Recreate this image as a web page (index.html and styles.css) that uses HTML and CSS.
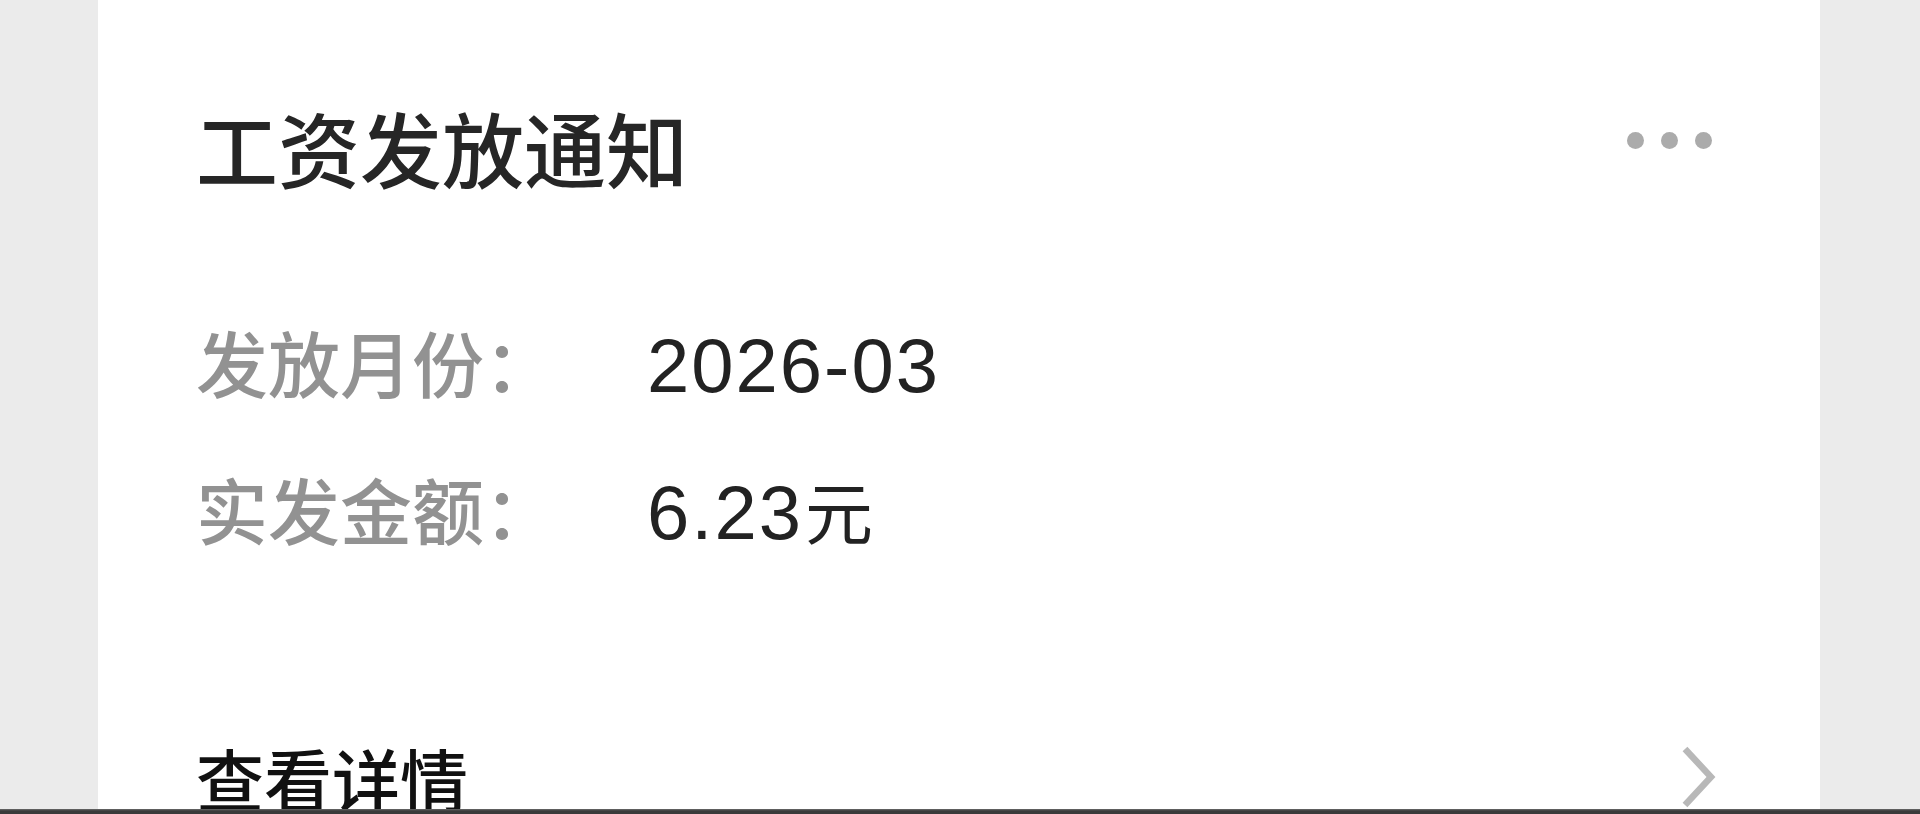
FILE: index.html
```html
<!DOCTYPE html>
<html lang="zh-CN">
<head>
<meta charset="utf-8">
<title>工资发放通知</title>
<link rel="stylesheet" href="styles.css">
</head>
<body>
<div class="page">
  <div class="stage">
    <div class="card">
      <div class="head">
        <h1 class="title">工资发放通知</h1>
        <div class="more"><span></span><span></span><span></span></div>
      </div>
      <div class="info">
        <div class="row">
          <div class="label">发放月份：</div>
          <div class="value">2026-03</div>
        </div>
        <div class="row">
          <div class="label">实发金额：</div>
          <div class="value">6.23<span class="unit">元</span></div>
        </div>
      </div>
      <div class="link">
        <div class="link-text">查看详情</div>
        <svg class="chev" width="44" height="66" viewBox="0 0 44 66"><path d="M13 3 L39 31 L13 59" fill="none" stroke="#b8b8b8" stroke-width="6.5" stroke-linejoin="miter"/></svg>
      </div>
    </div>
  </div>
  <div class="bar"></div>
</div>
</body>
</html>
```
FILE: styles.css
```css
html, body {
  margin: 0;
  padding: 0;
}
body {
  background: #ebebeb;
  font-family: "Noto Sans CJK SC", "Noto Sans", sans-serif;
}
.page {
  width: 1920px;
  height: 814px;
  display: flex;
  flex-direction: column;
  overflow: hidden;
}
.stage {
  height: 809px;
  padding-left: 98px;
  overflow: hidden;
}
.card {
  width: 1722px;
  height: 809px;
  box-sizing: border-box;
  background: #ffffff;
  padding: 106px 108px 0 98px;
  overflow: hidden;
}
.head {
  display: flex;
  justify-content: space-between;
  align-items: flex-start;
}
.title {
  margin: 0;
  font-size: 82px;
  line-height: 82px;
  font-weight: 500;
  color: #262626;
}
.more {
  display: flex;
  gap: 17px;
  margin-top: 26px;
}
.more span {
  width: 17px;
  height: 17px;
  border-radius: 50%;
  background: #ababab;
}
.info {
  margin-top: 137px;
  display: flex;
  flex-direction: column;
  gap: 75px;
}
.row {
  display: flex;
  align-items: baseline;
  height: 72px;
}
.label {
  width: 451px;
  flex: none;
  font-size: 72px;
  line-height: 72px;
  font-weight: 500;
  color: #929292;
}
.value {
  font-family: "Liberation Sans", "Noto Sans CJK SC", sans-serif;
  font-size: 76px;
  line-height: 72px;
  letter-spacing: 2px;
  color: #222222;
}
.unit {
  font-family: "Noto Sans CJK SC", sans-serif;
  font-size: 68px;
  letter-spacing: 0;
  margin-left: 2px;
}
.link {
  margin-top: 198px;
  display: flex;
  justify-content: space-between;
  align-items: flex-start;
}
.link-text {
  font-size: 68px;
  line-height: 68px;
  font-weight: 500;
  color: #111111;
  padding-top: 2px;
}
.chev {
  margin-top: 4px;
  margin-right: -4px;
}
.bar {
  height: 5px;
  background: linear-gradient(#6a6a6a, #3a3a3a 40%, #3a3a3a);
}
```
